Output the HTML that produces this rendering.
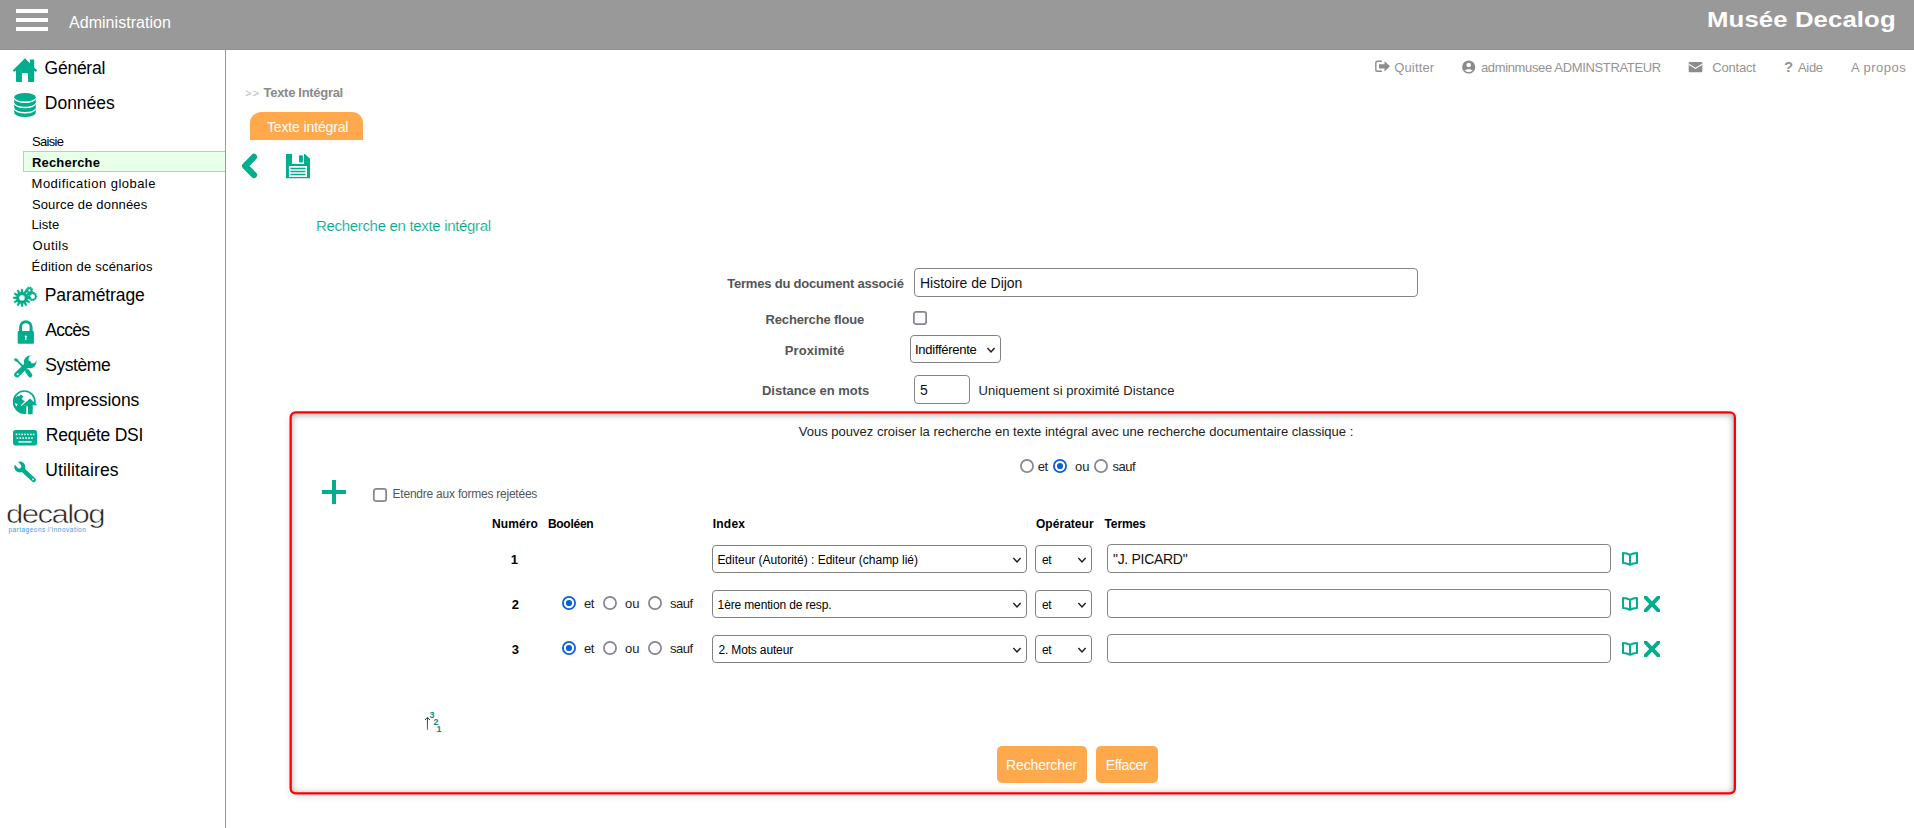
<!DOCTYPE html>
<html lang="fr">
<head>
<meta charset="utf-8">
<title>Administration - Texte intégral</title>
<style>
html,body{margin:0;padding:0;}
body{width:1914px;height:828px;overflow:hidden;background:#fff;position:relative;
  font-family:"Liberation Sans",sans-serif;color:#000;}
.a{position:absolute;white-space:nowrap;line-height:1;margin:0;padding:0;}
svg{position:absolute;overflow:visible;}
/* header */
#hdr{left:0;top:0;width:1914px;height:50px;background:linear-gradient(#999 0,#999 49px,#919191 49px,#919191 50px);}
.bar{left:16px;width:32px;height:4px;background:#fff;}
#adm{left:69px;top:14px;font-size:16px;color:#fff;}
#title{left:1708px;top:7px;font-size:22px;font-weight:bold;color:#fff;transform:scaleX(1.17);transform-origin:0 0;}
/* sidebar */
#sbline{left:225px;top:50px;width:1px;height:778px;background:#999;}
.m1{left:45px;font-size:17.5px;color:#000;}
.m2{left:32px;font-size:13px;color:#000;}
#sel{left:23px;top:151px;width:201px;height:19px;background:#e8ffe8;border:1px solid #98e698;border-right:none;}
/* top links */
.tl{font-size:13px;color:#949494;top:61px;}
/* main */
#bc{left:245px;top:86px;font-size:13px;color:#8a8a8a;font-weight:bold;}
#tab{left:250px;top:112px;width:113px;height:28px;background:#ffa94c;border-radius:11px 11px 0 0;}
#tabt{left:266px;top:120px;font-size:14px;color:#fff;}
#h1{left:317px;top:218px;font-size:15px;color:#00a98a;-webkit-text-stroke:0.18px #fff;}
.lb{font-size:13px;font-weight:bold;color:#555;}
.inp{box-sizing:border-box;border:1px solid #858585;border-radius:4px;background:#fff;}
.sel{box-sizing:border-box;border:1px solid #828282;border-radius:4px;background:#fff;}
.it{font-size:14px;color:#111;}
.st{font-size:12px;color:#000;}
.cb{box-sizing:border-box;width:13px;height:13px;border:1.5px solid #767680;border-radius:2.5px;background:#fff;}
.th{font-size:12px;font-weight:bold;color:#000;top:518px;}
.num{font-size:13px;font-weight:bold;color:#000;left:511px;}
.rt{font-size:13px;color:#1c1c1c;}
.rt2{font-size:13px;color:#222;}
.rd{box-sizing:border-box;width:14px;height:14px;border:1.5px solid #767680;border-radius:50%;background:#fff;}
.rd.on{border-color:#0a64d8;}
.rd.on::after{content:"";position:absolute;left:2px;top:2px;width:7px;height:7px;border-radius:50%;background:#0a64d8;}
#boxsh{left:291px;top:413px;width:1443px;height:380px;border-radius:5px;box-shadow:0 2px 7px 1px rgba(0,0,0,.13), inset 0 1px 6px 1px rgba(0,0,0,.32);}
.btn{top:746px;height:37px;background:#ffa94c;border-radius:5px;}
.sd{font-size:9px;font-weight:bold;color:#178a7a;}
.bt{font-size:14px;color:#fff;top:759px;}
</style>
</head>
<body>
<!-- HEADER -->
<div class="a" id="hdr"></div>
<div class="a bar" style="top:9px"></div>
<div class="a bar" style="top:18px"></div>
<div class="a bar" style="top:27px"></div>
<div class="a" id="adm" style="left:69.0px;top:14.9px;letter-spacing:0.04px">Administration</div>
<div class="a" id="title" style="left:1707.0px;top:8.8px;letter-spacing:0.09px">Musée Decalog</div>

<!-- SIDEBAR -->
<div class="a" id="sbline"></div>
<div class="a m1" id="m_gen" style="top:59.5px;left:44.6px;letter-spacing:-0.26px">Général</div>
<div class="a m1" id="m_don" style="top:94.6px;left:44.8px;letter-spacing:-0.01px">Données</div>
<div class="a" id="sel"></div>
<div class="a m2" id="s1" style="top:134.6px;left:31.9px;letter-spacing:-0.64px">Saisie</div>
<div class="a m2" id="s2" style="top:155.5px;font-weight:bold;left:31.9px;letter-spacing:0.20px">Recherche</div>
<div class="a m2" id="s3" style="top:176.5px;left:31.6px;letter-spacing:0.47px">Modification globale</div>
<div class="a m2" id="s4" style="top:197.5px;left:31.9px;letter-spacing:0.16px">Source de données</div>
<div class="a m2" id="s5" style="top:218.4px;left:31.6px;letter-spacing:0.02px">Liste</div>
<div class="a m2" id="s6" style="top:239.4px;left:32.6px;letter-spacing:0.48px">Outils</div>
<div class="a m2" id="s7" style="top:260.4px;left:31.6px;letter-spacing:0.20px">Édition de scénarios</div>
<div class="a m1" id="m_par" style="top:286.8px;left:44.8px;letter-spacing:-0.12px">Paramétrage</div>
<div class="a m1" id="m_acc" style="top:321.7px;left:45.2px;letter-spacing:-0.70px">Accès</div>
<div class="a m1" id="m_sys" style="top:356.8px;left:45.2px;letter-spacing:-0.42px">Système</div>
<div class="a m1" id="m_imp" style="top:391.8px;left:45.8px;letter-spacing:-0.08px">Impressions</div>
<div class="a m1" id="m_req" style="top:426.9px;left:45.8px;letter-spacing:-0.27px">Requête DSI</div>
<div class="a m1" id="m_uti" style="top:462.0px;left:45.2px;letter-spacing:0.14px">Utilitaires</div>
<div class="a" id="logo" style="left:6.2px;top:501.4px;font-size:26px;color:#222;letter-spacing:-1.35px;-webkit-text-stroke:0.55px #fff;transform:scaleX(1.2);transform-origin:0 0">decalog</div>
<div class="a" id="slog" style="left:8.4px;top:526.6px;font-size:6.5px;color:#3d9bd9;letter-spacing:0.48px">partageons l’innovation</div>

<!-- TOP LINKS -->
<div class="a tl" id="t_quit" style="left:1394.2px;top:60.8px;letter-spacing:0.16px">Quitter</div>
<div class="a tl" id="t_user" style="left:1480.9px;top:60.8px;letter-spacing:-0.35px">adminmusee ADMINSTRATEUR</div>
<div class="a tl" id="t_cont" style="left:1712.2px;top:60.9px;letter-spacing:-0.18px">Contact</div>
<div class="a tl" id="t_q" style="left:1784.0px;font-weight:bold;top:59.0px;font-size:15px">?</div>
<div class="a tl" id="t_aide" style="left:1798.0px;top:60.9px;letter-spacing:-0.34px">Aide</div>
<div class="a tl" id="t_apr" style="left:1851.0px;top:60.9px;letter-spacing:0.49px">A propos</div>


<!-- ICONS: sidebar -->
<svg id="ic_home" style="left:13px;top:58px" width="24" height="24" viewBox="0 0 24 24"><path fill="#00ad8c" d="M12 0.2 L17 5.2 V2.2 Q17 1.6 17.6 1.6 H20.6 Q21.2 1.6 21.2 2.2 V9.4 L23.8 12 Q24.2 12.5 23.8 13 L23.3 13.5 Q22.8 13.9 22.3 13.5 L21.2 12.5 V23 Q21.2 24 20.2 24 H15 V16.4 Q15 15.1 13.7 15.1 H10.2 Q8.9 15.1 8.9 16.4 V24 H4 Q3 24 3 23 V12.5 L1.7 13.5 Q1.2 13.9 0.7 13.5 L0.2 13 Q-0.2 12.5 0.2 12 Z"/></svg>
<svg id="ic_db" style="left:14px;top:93px" width="22" height="24" viewBox="0 0 21.6 24"><g fill="#00ad8c"><ellipse cx="10.8" cy="4.2" rx="10.8" ry="4.2"/><path d="M0 5.8 a10.8 4.2 0 0 0 21.6 0 v3.8 a10.8 4.2 0 0 1 -21.6 0 z"/><path d="M0 11 a10.8 4.2 0 0 0 21.6 0 v3.8 a10.8 4.2 0 0 1 -21.6 0 z"/><path d="M0 16.2 a10.8 4.2 0 0 0 21.6 0 v3.6 a10.8 4.2 0 0 1 -21.6 0 z"/></g></svg>
<svg id="ic_gears" style="left:12px;top:285px" width="26" height="23" viewBox="12 285 26 23"><g fill="#00ad8c" fill-rule="evenodd" stroke="#00ad8c" stroke-width="0.3" stroke-linejoin="round"><path d="M27.53 296.71 L30.82 297.10 L30.82 298.60 L27.53 298.99 L27.36 299.65 L30.00 301.64 L29.26 302.93 L26.22 301.63 L25.73 302.12 L27.03 305.16 L25.74 305.90 L23.75 303.26 L23.09 303.43 L22.70 306.72 L21.20 306.72 L20.81 303.43 L20.15 303.26 L18.16 305.90 L16.87 305.16 L18.17 302.12 L17.68 301.63 L14.64 302.93 L13.90 301.64 L16.54 299.65 L16.37 298.99 L13.08 298.60 L13.08 297.10 L16.37 296.71 L16.54 296.05 L13.90 294.06 L14.64 292.77 L17.68 294.07 L18.17 293.58 L16.87 290.54 L18.16 289.80 L20.15 292.44 L20.81 292.27 L21.20 288.98 L22.70 288.98 L23.09 292.27 L23.75 292.44 L25.74 289.80 L27.03 290.54 L25.73 293.58 L26.22 294.07 L29.26 292.77 L30.00 294.06 L27.36 296.05 Z M19.00 297.85 a2.95 2.95 0 1 0 5.90 0 a2.95 2.95 0 1 0 -5.90 0 Z"/><path d="M32.27 290.79 L33.06 291.43 L32.71 292.26 L31.71 292.16 L31.16 292.71 L31.26 293.71 L30.43 294.06 L29.79 293.27 L29.01 293.27 L28.37 294.06 L27.54 293.71 L27.64 292.71 L27.09 292.16 L26.09 292.26 L25.74 291.43 L26.53 290.79 L26.53 290.01 L25.74 289.37 L26.09 288.54 L27.09 288.64 L27.64 288.09 L27.54 287.09 L28.37 286.74 L29.01 287.53 L29.79 287.53 L30.43 286.74 L31.26 287.09 L31.16 288.09 L31.71 288.64 L32.71 288.54 L33.06 289.37 L32.27 290.01 Z M28.10 290.40 a1.30 1.30 0 1 0 2.60 0 a1.30 1.30 0 1 0 -2.60 0 Z"/><path d="M36.22 295.61 L37.07 295.90 L37.07 296.90 L36.22 297.19 L35.97 297.94 L36.49 298.68 L35.91 299.49 L35.04 299.23 L34.40 299.69 L34.39 300.59 L33.44 300.90 L32.89 300.18 L32.11 300.18 L31.56 300.90 L30.61 300.59 L30.60 299.69 L29.96 299.23 L29.09 299.49 L28.51 298.68 L29.03 297.94 L28.78 297.19 L27.93 296.90 L27.93 295.90 L28.78 295.61 L29.03 294.86 L28.51 294.12 L29.09 293.31 L29.96 293.57 L30.60 293.11 L30.61 292.21 L31.56 291.90 L32.11 292.62 L32.89 292.62 L33.44 291.90 L34.39 292.21 L34.40 293.11 L35.04 293.57 L35.91 293.31 L36.49 294.12 L35.97 294.86 Z M30.00 296.40 a2.50 2.50 0 1 0 5.00 0 a2.50 2.50 0 1 0 -5.00 0 Z"/></g></svg>
<svg id="ic_lock" style="left:17px;top:319px" width="18" height="26" viewBox="17 319 18 26"><rect x="17.7" y="331" width="16.2" height="12.7" rx="1" fill="#00ad8c"/><path d="M20.6 332 V327 a5.25 5.25 0 0 1 10.5 0 V332" fill="none" stroke="#00ad8c" stroke-width="3"/><circle cx="25.8" cy="336.6" r="1.1" fill="#fff"/><rect x="25.2" y="336.6" width="1.2" height="3.4" fill="#fff"/></svg>
<svg id="ic_tools" style="left:13px;top:355px" width="24" height="24" viewBox="13 355 24 24"><circle cx="30.2" cy="361.9" r="6.3" fill="#00ad8c"/><circle cx="32.4" cy="359.4" r="3.9" fill="#fff"/><path d="M28.6 363.4 L16.9 374.7" fill="none" stroke="#00ad8c" stroke-width="5.4" stroke-linecap="round"/><circle cx="17.7" cy="374.2" r="1.05" fill="#fff"/><ellipse cx="16.2" cy="360" rx="2.3" ry="1.4" transform="rotate(35 16.2 360)" fill="#00ad8c"/><path d="M16.5 360.2 L25.5 369" fill="none" stroke="#00ad8c" stroke-width="1.8"/><path d="M27.2 371.1 L30.2 375.2" fill="none" stroke="#00ad8c" stroke-width="4.2" stroke-linecap="round"/></svg>
<svg id="ic_globe" style="left:12px;top:390px" width="26" height="25" viewBox="12 390 26 25"><circle cx="24.3" cy="401.6" r="10.6" fill="#fff" stroke="#00ad8c" stroke-width="1.7"/><path fill="#00ad8c" d="M14.2 397.6 L16.6 396.9 L17.6 395.4 L18.9 396.6 L20.4 394.7 L22 395 L23.4 397.1 L21.7 398.3 L22.8 399.9 L25 401.3 L22 405.2 L28 405.8 L28 413.4 A11.4 11.4 0 0 1 14.2 397.6 Z"/><path fill="#fff" d="M14.8 402.9 L17.7 404.3 L16.2 406.8 Z"/><rect x="32.6" y="404.6" width="5.4" height="8" fill="#fff"/><path d="M21.2 405.5 L29.9 397.9" fill="none" stroke="#fff" stroke-width="1.1"/><rect x="26.3" y="406.4" width="1.7" height="8" fill="#fff"/><path fill="#00ad8c" d="M30.1 398.5 L37.3 405.3 H32.6 V414.2 H27.9 V405.8 H21.6 Z"/></svg>
<svg id="ic_kbd" style="left:13px;top:430px" width="24" height="16" viewBox="13 430 24 16"><rect x="13" y="430" width="24.1" height="15.4" rx="2.6" fill="#00ad8c"/><g fill="#fff"><rect x="15.7" y="433.6" width="1.6" height="1.6"/><rect x="18.6" y="433.6" width="1.6" height="1.6"/><rect x="21.4" y="433.6" width="1.6" height="1.6"/><rect x="24.3" y="433.6" width="1.6" height="1.6"/><rect x="27.1" y="433.6" width="1.6" height="1.6"/><rect x="30" y="433.6" width="1.6" height="1.6"/><rect x="32.8" y="433.6" width="1.6" height="1.6"/><rect x="16.6" y="437.3" width="1.6" height="1.6"/><rect x="19.5" y="437.3" width="1.6" height="1.6"/><rect x="22.4" y="437.3" width="1.6" height="1.6"/><rect x="25.3" y="437.3" width="1.6" height="1.6"/><rect x="28.2" y="437.3" width="1.6" height="1.6"/><rect x="31.1" y="437.3" width="1.6" height="1.6"/><rect x="18.4" y="441.2" width="13.2" height="1.4"/></g></svg>
<svg id="ic_wrench" style="left:13px;top:460px" width="24" height="24" viewBox="13 460 24 24"><g transform="translate(19.8 467) rotate(43)"><rect x="0" y="-2.25" width="21.2" height="4.5" rx="2.25" fill="#00ad8c"/><circle cx="0" cy="0" r="5.5" fill="#00ad8c"/><rect x="-7" y="-2.15" width="8.2" height="4.3" rx="2.15" fill="#fff" transform="rotate(6)"/><circle cx="18.1" cy="0" r="0.95" fill="#fff"/></g></svg>

<!-- ICONS: top links -->
<svg id="ic_quit" style="left:1375px;top:60px" width="16" height="13" viewBox="1375 60 16 13"><path d="M1381.4 61.2 H1377.6 Q1375.8 61.2 1375.8 63 V69.4 Q1375.8 71.2 1377.6 71.2 H1381.4" fill="none" stroke="#8c8c8c" stroke-width="1.4" stroke-linecap="round"/><path d="M1379 64.2 H1384.5 V61.3 L1390 66.3 L1384.5 71.6 V68.5 H1379 Z" fill="#8c8c8c"/></svg>
<svg id="ic_user" style="left:1462px;top:60px" width="14" height="14" viewBox="1462 60 14 14"><circle cx="1468.7" cy="67" r="6.55" fill="#8c8c8c"/><circle cx="1468.7" cy="65" r="2.3" fill="#fff"/><path d="M1464.6 70.6 Q1468.7 67.4 1472.8 70.6 Q1468.7 73.6 1464.6 70.6 Z" fill="#fff"/></svg>
<svg id="ic_mail" style="left:1688px;top:61px" width="15" height="12" viewBox="1688 61 15 12"><rect x="1688.7" y="61.9" width="13.6" height="10.3" rx="1" fill="#8c8c8c"/><path d="M1688.9 64.2 L1695.5 68.4 L1702.1 64.2" fill="none" stroke="#fff" stroke-width="1.1"/></svg>

<!-- ICONS: toolbar -->
<svg id="ic_back" style="left:240px;top:153px" width="18" height="26" viewBox="240 153 18 26"><path d="M254 156.9 L245.1 166 L254 175" fill="none" stroke="#00ad8c" stroke-width="6.2" stroke-linecap="round" stroke-linejoin="round"/></svg>
<svg id="ic_save" style="left:286px;top:153.7px" width="24" height="24.3" viewBox="0 0 24 24.3"><path fill="#00ad8c" d="M0 0 H6 V10 H18 V0 H18.9 L24 4.8 V24.3 H0 Z M2.9 12.1 V22.9 H21 V12.1 Z"/><rect x="13" y="1.2" width="3.9" height="7.3" rx="1" fill="#00ad8c"/><g fill="#00ad8c"><rect x="4.3" y="13.7" width="15.3" height="1.6" rx=".8"/><rect x="4.3" y="16.7" width="15.3" height="1.6" rx=".8"/><rect x="4.3" y="19.7" width="15.3" height="1.6" rx=".8"/></g></svg>

<!-- ICONS: box -->
<div class="a" style="left:322px;top:490px;width:24px;height:4px;background:#00ad8c"></div>
<div class="a" style="left:332px;top:480px;width:4px;height:24px;background:#00ad8c"></div>
<svg style="left:1622px;top:552px" width="16" height="14" viewBox="0 0 16 14"><path d="M1 1 Q5 1 8 2.8 V12.8 Q5 11 1 11 Z M15 1 Q11 1 8 2.8 V12.8 Q11 11 15 11 Z" fill="none" stroke="#00ad8c" stroke-width="2" stroke-linejoin="round"/></svg>
<svg style="left:1622px;top:597px" width="16" height="14" viewBox="0 0 16 14"><path d="M1 1 Q5 1 8 2.8 V12.8 Q5 11 1 11 Z M15 1 Q11 1 8 2.8 V12.8 Q11 11 15 11 Z" fill="none" stroke="#00ad8c" stroke-width="2" stroke-linejoin="round"/></svg>
<svg style="left:1644px;top:596px" width="16" height="16" viewBox="0 0 16 16"><path fill="#00ad8c" d="M0 0 H3 L8 5.2 L13 0 H16 V2.6 L10.8 8 L16 13.4 V16 H13 L8 10.8 L3 16 H0 V13.4 L5.2 8 L0 2.6 Z"/></svg>
<svg style="left:1622px;top:642px" width="16" height="14" viewBox="0 0 16 14"><path d="M1 1 Q5 1 8 2.8 V12.8 Q5 11 1 11 Z M15 1 Q11 1 8 2.8 V12.8 Q11 11 15 11 Z" fill="none" stroke="#00ad8c" stroke-width="2" stroke-linejoin="round"/></svg>
<svg style="left:1644px;top:641px" width="16" height="16" viewBox="0 0 16 16"><path fill="#00ad8c" d="M0 0 H3 L8 5.2 L13 0 H16 V2.6 L10.8 8 L16 13.4 V16 H13 L8 10.8 L3 16 H0 V13.4 L5.2 8 L0 2.6 Z"/></svg>

<!-- sort icon -->
<svg id="ic_sort" style="left:424px;top:716px" width="8" height="15" viewBox="424 716 8 15"><defs><linearGradient id="ga" x1="0" y1="0" x2="0" y2="1"><stop offset="0" stop-color="#3a3a44"/><stop offset="1" stop-color="#3d86c8"/></linearGradient></defs><rect x="426.9" y="717.6" width="1.1" height="12.3" fill="url(#ga)"/><path d="M425 720 L427.45 717.4 L429.9 720" fill="none" stroke="#3a3a44" stroke-width="1"/></svg>
<div class="a sd" id="d3" style="left:429.4px;top:710.8px">3</div>
<div class="a sd" id="d2" style="left:433.4px;top:717.8px">2</div>
<div class="a sd" id="d1" style="left:436.4px;top:724.9px">1</div>

<!-- MAIN -->
<div class="a" id="bc" style="left:245.0px;top:86.2px;letter-spacing:-0.30px"><span style="font-weight:normal;font-size:11px;letter-spacing:1.2px;-webkit-text-stroke:0.25px #fff">&gt;&gt;</span> Texte Intégral</div>
<div class="a" id="tab"></div>
<div class="a" id="tabt" style="left:267.0px;top:120.0px;letter-spacing:-0.14px">Texte intégral</div>
<div class="a" id="h1" style="left:316.0px;top:217.9px;letter-spacing:-0.32px">Recherche en texte intégral</div>

<div class="a lb" id="l1" style="left:727.2px;top:276.6px;letter-spacing:-0.20px">Termes du document associé</div>
<div class="a inp" style="left:914px;top:268px;width:504px;height:29px"></div>
<div class="a it" id="i1" style="left:920.0px;top:275.8px;letter-spacing:-0.02px">Histoire de Dijon</div>

<div class="a lb" id="l2" style="left:765.6px;top:313.0px;letter-spacing:-0.18px">Recherche floue</div>
<svg style="left:913px;top:311.3px" width="14" height="14" viewBox="0 0 14 14"><rect x="0.85" y="0.85" width="12.3" height="12.3" rx="2.2" fill="#fff" stroke="#848492" stroke-width="1.7"/></svg>

<div class="a lb" id="l3" style="left:784.8px;top:344.0px;letter-spacing:0.07px">Proximité</div>
<div class="a sel" style="left:910px;top:335px;width:91px;height:28px"></div>
<div class="a st" id="sp" style="left:915.0px;top:343.3px;font-size:13px;letter-spacing:-0.27px">Indifférente</div>

<div class="a lb" id="l4" style="left:762.0px;top:384.0px;letter-spacing:-0.03px">Distance en mots</div>
<div class="a inp" style="left:914px;top:375px;width:56px;height:29px"></div>
<div class="a it" id="i2" style="left:920.0px;top:382.9px">5</div>
<div class="a" id="uq" style="left:978.6px;top:384.0px;font-size:13px;color:#222;letter-spacing:0.07px">Uniquement si proximité Distance</div>

<!-- RED BOX -->
<div class="a" id="boxsh"></div>
<svg id="boxsvg" style="left:270px;top:395px" width="1490" height="420" viewBox="270 395 1490 420"><rect x="290.65" y="412.45" width="1444.2" height="380.9" rx="5" fill="none" stroke="#ff0000" stroke-width="2.3"/></svg>
<div class="a" id="vp" style="left:798.8px;top:424.9px;font-size:13px;color:#222;letter-spacing:0.01px">Vous pouvez croiser la recherche en texte intégral avec une recherche documentaire classique :</div>

<svg style="left:373px;top:488px" width="14" height="14" viewBox="0 0 14 14"><rect x="0.85" y="0.85" width="12.3" height="12.3" rx="2.2" fill="#fff" stroke="#848492" stroke-width="1.7"/></svg>
<div class="a" id="et" style="left:392.6px;top:487.8px;font-size:12px;color:#555;letter-spacing:-0.23px">Etendre aux formes rejetées</div>

<div class="a th" id="h_num" style="left:492.0px;top:518.0px;letter-spacing:0.12px">Numéro</div>
<div class="a th" id="h_boo" style="left:547.9px;top:518.0px;letter-spacing:-0.26px">Booléen</div>
<div class="a th" id="h_idx" style="left:712.8px;top:518.0px;letter-spacing:0.20px">Index</div>
<div class="a th" id="h_op" style="left:1036.0px;top:518.0px;letter-spacing:0.03px">Opérateur</div>
<div class="a th" id="h_ter" style="left:1104.6px;top:518.0px;letter-spacing:-0.16px">Termes</div>


<!-- top radios -->
<svg style="left:1020px;top:459px" width="14" height="14" viewBox="0 0 14 14"><circle cx="7" cy="7" r="6.1" fill="#fff" stroke="#848492" stroke-width="1.7"/></svg>
<div class="a rt2" id="r_et" style="left:1037.8px;top:459.6px;letter-spacing:-0.5px">et</div>
<svg style="left:1053px;top:459px" width="14" height="14" viewBox="0 0 14 14"><circle cx="7" cy="7" r="6.1" fill="#fff" stroke="#0b5fdb" stroke-width="1.8"/><circle cx="7" cy="7" r="3.1" fill="#0b5fdb"/></svg>
<div class="a rt2" id="r_ou" style="left:1075.1px;top:459.6px">ou</div>
<svg style="left:1094px;top:459px" width="14" height="14" viewBox="0 0 14 14"><circle cx="7" cy="7" r="6.1" fill="#fff" stroke="#848492" stroke-width="1.7"/></svg>
<div class="a rt2" id="r_sauf" style="left:1112.4px;top:459.6px;letter-spacing:-0.45px">sauf</div>

<!-- row 1 -->
<div class="a num" id="n1" style="top:553.0px;left:510.8px">1</div>
<div class="a sel" style="left:712px;top:545px;width:315px;height:28px"></div>
<div class="a st" id="o1" style="left:717.4px;top:554.0px;letter-spacing:-0.02px">Editeur (Autorité) : Editeur (champ lié)</div>
<div class="a sel" style="left:1035px;top:545px;width:57px;height:28px"></div>
<div class="a st" id="e1" style="left:1042.0px;top:553.6px;letter-spacing:-0.5px">et</div>
<div class="a inp" style="left:1107px;top:544px;width:504px;height:29px"></div>
<div class="a it" id="i3" style="left:1113.0px;top:552.0px;letter-spacing:-0.30px">"J. PICARD"</div>

<!-- row 2 -->
<div class="a num" id="n2" style="top:598.0px;left:511.8px">2</div>
<svg style="left:562px;top:596px" width="14" height="14" viewBox="0 0 14 14"><circle cx="7" cy="7" r="6.1" fill="#fff" stroke="#0b5fdb" stroke-width="1.8"/><circle cx="7" cy="7" r="3.1" fill="#0b5fdb"/></svg>
<div class="a rt" id="r2a" style="left:584.0px;top:597.0px;letter-spacing:-0.5px">et</div>
<svg style="left:603px;top:596px" width="14" height="14" viewBox="0 0 14 14"><circle cx="7" cy="7" r="6.1" fill="#fff" stroke="#848492" stroke-width="1.7"/></svg>
<div class="a rt" id="r2b" style="left:625.0px;top:597.0px">ou</div>
<svg style="left:648px;top:596px" width="14" height="14" viewBox="0 0 14 14"><circle cx="7" cy="7" r="6.1" fill="#fff" stroke="#848492" stroke-width="1.7"/></svg>
<div class="a rt" id="r2c" style="left:670.1px;top:597.0px;letter-spacing:-0.53px">sauf</div>
<div class="a sel" style="left:712px;top:590px;width:315px;height:28px"></div>
<div class="a st" id="o2" style="left:717.6px;top:598.7px;letter-spacing:-0.14px">1ère mention de resp.</div>
<div class="a sel" style="left:1035px;top:590px;width:57px;height:28px"></div>
<div class="a st" id="e2" style="left:1042.0px;top:598.6px;letter-spacing:-0.5px">et</div>
<div class="a inp" style="left:1107px;top:589px;width:504px;height:29px"></div>

<!-- row 3 -->
<div class="a num" id="n3" style="top:643.0px;left:511.8px">3</div>
<svg style="left:562px;top:641px" width="14" height="14" viewBox="0 0 14 14"><circle cx="7" cy="7" r="6.1" fill="#fff" stroke="#0b5fdb" stroke-width="1.8"/><circle cx="7" cy="7" r="3.1" fill="#0b5fdb"/></svg>
<div class="a rt" id="r3a" style="left:584.0px;top:642.0px;letter-spacing:-0.5px">et</div>
<svg style="left:603px;top:641px" width="14" height="14" viewBox="0 0 14 14"><circle cx="7" cy="7" r="6.1" fill="#fff" stroke="#848492" stroke-width="1.7"/></svg>
<div class="a rt" id="r3b" style="left:625.0px;top:642.0px">ou</div>
<svg style="left:648px;top:641px" width="14" height="14" viewBox="0 0 14 14"><circle cx="7" cy="7" r="6.1" fill="#fff" stroke="#848492" stroke-width="1.7"/></svg>
<div class="a rt" id="r3c" style="left:670.1px;top:642.0px;letter-spacing:-0.53px">sauf</div>
<div class="a sel" style="left:712px;top:635px;width:315px;height:28px"></div>
<div class="a st" id="o3" style="left:718.4px;top:643.7px;letter-spacing:-0.15px">2. Mots auteur</div>
<div class="a sel" style="left:1035px;top:635px;width:57px;height:28px"></div>
<div class="a st" id="e3" style="left:1042.0px;top:643.6px;letter-spacing:-0.5px">et</div>
<div class="a inp" style="left:1107px;top:634px;width:504px;height:29px"></div>


<!-- select arrows -->
<svg style="left:986px;top:345.5px" width="10" height="8" viewBox="-5 -4 10 8"><path d="M-3.6 -1.9 L0 1.9 L3.6 -1.9" fill="none" stroke="#1f1f1f" stroke-width="1.5"/></svg><svg style="left:1012px;top:555.5px" width="10" height="8" viewBox="-5 -4 10 8"><path d="M-3.6 -1.9 L0 1.9 L3.6 -1.9" fill="none" stroke="#1f1f1f" stroke-width="1.5"/></svg><svg style="left:1077px;top:555.5px" width="10" height="8" viewBox="-5 -4 10 8"><path d="M-3.6 -1.9 L0 1.9 L3.6 -1.9" fill="none" stroke="#1f1f1f" stroke-width="1.5"/></svg><svg style="left:1012px;top:600.5px" width="10" height="8" viewBox="-5 -4 10 8"><path d="M-3.6 -1.9 L0 1.9 L3.6 -1.9" fill="none" stroke="#1f1f1f" stroke-width="1.5"/></svg><svg style="left:1077px;top:600.5px" width="10" height="8" viewBox="-5 -4 10 8"><path d="M-3.6 -1.9 L0 1.9 L3.6 -1.9" fill="none" stroke="#1f1f1f" stroke-width="1.5"/></svg><svg style="left:1012px;top:645.5px" width="10" height="8" viewBox="-5 -4 10 8"><path d="M-3.6 -1.9 L0 1.9 L3.6 -1.9" fill="none" stroke="#1f1f1f" stroke-width="1.5"/></svg><svg style="left:1077px;top:645.5px" width="10" height="8" viewBox="-5 -4 10 8"><path d="M-3.6 -1.9 L0 1.9 L3.6 -1.9" fill="none" stroke="#1f1f1f" stroke-width="1.5"/></svg>
<!-- buttons -->
<div class="a btn" style="left:997px;width:90px"></div>
<div class="a btn" style="left:1096px;width:62px"></div>
<div class="a bt" id="b1" style="left:1006.0px;top:757.9px;letter-spacing:-0.13px">Rechercher</div>
<div class="a bt" id="b2" style="left:1105.8px;top:757.9px;letter-spacing:-0.37px">Effacer</div>
</body>
</html>
